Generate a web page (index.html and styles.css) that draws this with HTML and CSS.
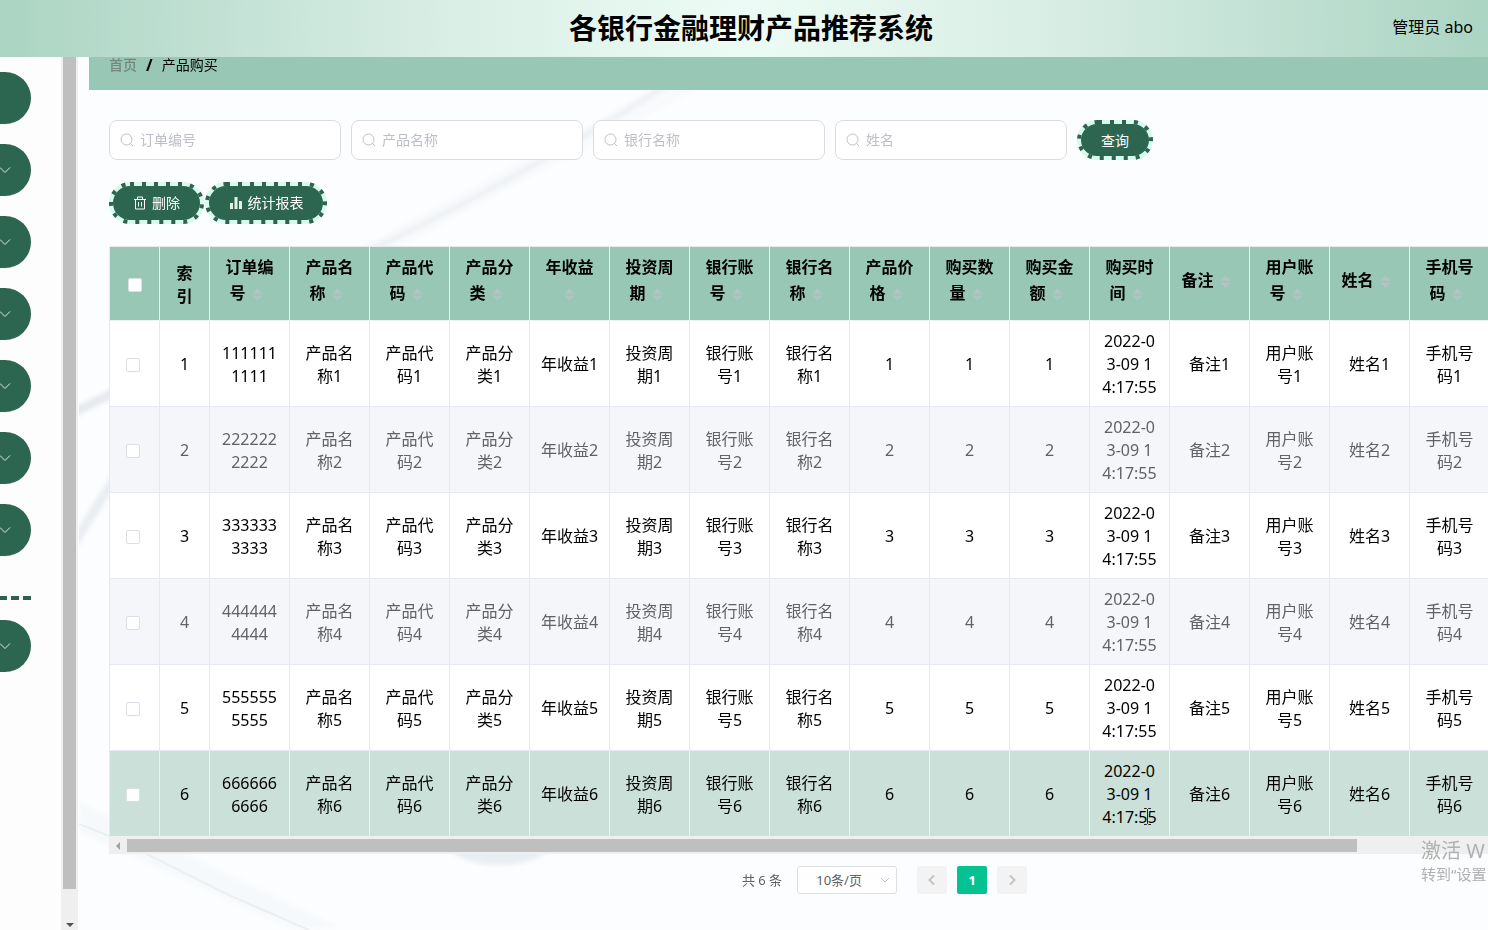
FILE: index.html
```html
<!DOCTYPE html>
<html lang="zh-CN">
<head>
<meta charset="utf-8">
<title>各银行金融理财产品推荐系统</title>
<link rel="stylesheet" href="styles.css">
</head>
<body>
<header class="topbar">
  <h1 class="title">各银行金融理财产品推荐系统</h1>
  <span class="user">管理员 abo</span>
</header>
<div class="layout">
  <nav class="sidebar" aria-label="菜单">
    <div class="menu">
      <button class="menu-item" aria-label="首页"></button>
      <button class="menu-item" aria-label="菜单 1"><svg class="chev" viewBox="0 0 12 12"><path d="M1 3.500l5 5 5-5"/></svg></button>
      <button class="menu-item" aria-label="菜单 2"><svg class="chev" viewBox="0 0 12 12"><path d="M1 3.500l5 5 5-5"/></svg></button>
      <button class="menu-item" aria-label="菜单 3"><svg class="chev" viewBox="0 0 12 12"><path d="M1 3.500l5 5 5-5"/></svg></button>
      <button class="menu-item" aria-label="菜单 4"><svg class="chev" viewBox="0 0 12 12"><path d="M1 3.500l5 5 5-5"/></svg></button>
      <button class="menu-item" aria-label="菜单 5"><svg class="chev" viewBox="0 0 12 12"><path d="M1 3.500l5 5 5-5"/></svg></button>
      <button class="menu-item" aria-label="菜单 6"><svg class="chev" viewBox="0 0 12 12"><path d="M1 3.500l5 5 5-5"/></svg></button>
      <div class="menu-line"></div>
      <button class="menu-item" aria-label="菜单 7"><svg class="chev" viewBox="0 0 12 12"><path d="M1 3.500l5 5 5-5"/></svg></button>
    </div>
    <div class="vbar"><div class="vthumb"></div><div class="varrow"></div></div>
  </nav>
  <main class="main">
    <svg class="backdrop" viewBox="0 0 1409 873" preserveAspectRatio="xMinYMin slice" aria-hidden="true">
      <defs><filter id="soft" x="-20%" y="-20%" width="140%" height="140%"><feGaussianBlur stdDeviation="2"/></filter></defs>
      <g filter="url(#soft)">
        <path d="M600 20C500 85 395 145 270 203" fill="none" stroke="#e9edf1" stroke-width="7"/>
        <path d="M620 20C500 85 400 135 280 203" fill="none" stroke="#f5f7f9" stroke-width="18" opacity=".5"/>
        <path d="M-10 358L50 328" fill="none" stroke="#e6e9ed" stroke-width="9"/>
        <path d="M-6 488L40 414" fill="none" stroke="#e9edf1" stroke-width="9"/>
        <path d="M0 745L260 870L215 873L0 775z" fill="#f6f9fb"/>
        <ellipse cx="420" cy="788" rx="50" ry="20" fill="#e9eef2"/>
      </g>
      <path d="M0 767L40 783L150 838L230 873" fill="none" stroke="#eceef1" stroke-width="2"/>
    </svg>
    <div class="sheet">
      <div class="crumbs"><a class="crumb-home" href="#">首页</a><b class="slash">/</b><span>产品购买</span></div>
      <div class="content">
        <form class="filters">
          <label class="field"><svg class="search" viewBox="0 0 14 14"><circle cx="6.5" cy="6.5" r="5.5"/><path d="M10.5 10.5l2.500 2.500"/></svg><input type="text" placeholder="订单编号" aria-label="订单编号"></label>
          <label class="field"><svg class="search" viewBox="0 0 14 14"><circle cx="6.5" cy="6.5" r="5.5"/><path d="M10.5 10.5l2.500 2.500"/></svg><input type="text" placeholder="产品名称" aria-label="产品名称"></label>
          <label class="field"><svg class="search" viewBox="0 0 14 14"><circle cx="6.5" cy="6.5" r="5.5"/><path d="M10.5 10.5l2.500 2.500"/></svg><input type="text" placeholder="银行名称" aria-label="银行名称"></label>
          <label class="field"><svg class="search" viewBox="0 0 14 14"><circle cx="6.5" cy="6.5" r="5.5"/><path d="M10.5 10.5l2.500 2.500"/></svg><input type="text" placeholder="姓名" aria-label="姓名"></label>
          <button class="pill pill-query" type="button"><svg class="ring"><rect/></svg>查询</button>
        </form>
        <div class="actions">
          <button class="pill pill-delete" type="button"><svg class="ring"><rect/></svg><svg class="ico" viewBox="0 0 14 14"><path d="M1 3.5h12M4.5 3V1h5v2M2.5 3.5v9.500h9V3.500M5.500 6v4.500M8.500 6v4.500"/></svg>删除</button>
          <button class="pill pill-report" type="button"><svg class="ring"><rect/></svg><svg class="ico ico-bars" viewBox="0 0 14 14"><path d="M1 7h3v6H1zM5.500 1h3v12h-3zM10 5h3v8h-3z"/></svg>统计报表</button>
        </div>
        <div class="table-wrap">
          <table class="grid">
            <colgroup><col class="c-small" span="2"><col class="c-std" span="16"></colgroup>
            <thead>
              <tr>
                <th><input type="checkbox" aria-label="全选"></th>
                <th class="plain">索引</th>
                <th>订单编号<i class="sort"></i></th><th>产品名称<i class="sort"></i></th><th>产品代码<i class="sort"></i></th><th>产品分类<i class="sort"></i></th><th>年收益<i class="sort"></i></th><th>投资周期<i class="sort"></i></th><th>银行账号<i class="sort"></i></th><th>银行名称<i class="sort"></i></th><th>产品价格<i class="sort"></i></th><th>购买数量<i class="sort"></i></th><th>购买金额<i class="sort"></i></th><th>购买时间<i class="sort"></i></th><th>备注<i class="sort"></i></th><th>用户账号<i class="sort"></i></th><th>姓名<i class="sort"></i></th><th>手机号码<i class="sort"></i></th>
              </tr>
            </thead>
            <tbody>
              <tr><td class="pick"><input type="checkbox" aria-label="选择 1"></td><td>1</td><td>1111111111</td><td>产品名称1</td><td>产品代码1</td><td>产品分类1</td><td>年收益1</td><td>投资周期1</td><td>银行账号1</td><td>银行名称1</td><td>1</td><td>1</td><td>1</td><td>2022-03-09 14:17:55</td><td>备注1</td><td>用户账号1</td><td>姓名1</td><td>手机号码1</td></tr>
              <tr><td class="pick"><input type="checkbox" aria-label="选择 2"></td><td>2</td><td>2222222222</td><td>产品名称2</td><td>产品代码2</td><td>产品分类2</td><td>年收益2</td><td>投资周期2</td><td>银行账号2</td><td>银行名称2</td><td>2</td><td>2</td><td>2</td><td>2022-03-09 14:17:55</td><td>备注2</td><td>用户账号2</td><td>姓名2</td><td>手机号码2</td></tr>
              <tr><td class="pick"><input type="checkbox" aria-label="选择 3"></td><td>3</td><td>3333333333</td><td>产品名称3</td><td>产品代码3</td><td>产品分类3</td><td>年收益3</td><td>投资周期3</td><td>银行账号3</td><td>银行名称3</td><td>3</td><td>3</td><td>3</td><td>2022-03-09 14:17:55</td><td>备注3</td><td>用户账号3</td><td>姓名3</td><td>手机号码3</td></tr>
              <tr><td class="pick"><input type="checkbox" aria-label="选择 4"></td><td>4</td><td>4444444444</td><td>产品名称4</td><td>产品代码4</td><td>产品分类4</td><td>年收益4</td><td>投资周期4</td><td>银行账号4</td><td>银行名称4</td><td>4</td><td>4</td><td>4</td><td>2022-03-09 14:17:55</td><td>备注4</td><td>用户账号4</td><td>姓名4</td><td>手机号码4</td></tr>
              <tr><td class="pick"><input type="checkbox" aria-label="选择 5"></td><td>5</td><td>5555555555</td><td>产品名称5</td><td>产品代码5</td><td>产品分类5</td><td>年收益5</td><td>投资周期5</td><td>银行账号5</td><td>银行名称5</td><td>5</td><td>5</td><td>5</td><td>2022-03-09 14:17:55</td><td>备注5</td><td>用户账号5</td><td>姓名5</td><td>手机号码5</td></tr>
              <tr class="active"><td class="pick"><input type="checkbox" aria-label="选择 6"></td><td>6</td><td>6666666666</td><td>产品名称6</td><td>产品代码6</td><td>产品分类6</td><td>年收益6</td><td>投资周期6</td><td>银行账号6</td><td>银行名称6</td><td>6</td><td>6</td><td>6</td><td class="hovered">2022-03-09 14:17:55<svg class="ibeam" viewBox="0 0 9 17"><path d="M1 .5h2.500l1 1 1-1H8M4.500 1.500v14M1 16.500h2.500l1-1 1 1H8"/></svg></td><td>备注6</td><td>用户账号6</td><td>姓名6</td><td>手机号码6</td></tr>
            </tbody>
          </table>
          <div class="hbar"><div class="harrow"></div><div class="hthumb"></div></div>
        </div>
        <div class="pager">
          <span class="total">共 6 条</span>
          <span class="size"><select aria-label="每页条数"><option>10条/页</option></select><svg class="down" viewBox="0 0 12 12"><path d="M2 4l4 4 4-4"/></svg></span>
          <div class="pages">
            <button class="page" aria-label="上一页"><svg viewBox="0 0 12 12"><path d="M8 1.500L3.500 6 8 10.500"/></svg></button>
            <button class="page current">1</button>
            <button class="page" aria-label="下一页"><svg viewBox="0 0 12 12"><path d="M4 1.500L8.500 6 4 10.500"/></svg></button>
          </div>
        </div>
      </div>
    </div>
  </main>
</div>
<aside class="notice"><div class="notice-head">激活 W</div><div class="notice-text">转到“设置</div></aside>
</body>
</html>
```

FILE: styles.css
```css
* { box-sizing: border-box; }
body {
  margin: 0;
  height: 100vh;
  display: flex;
  flex-direction: column;
  overflow: hidden;
  position: relative;
  background: #fdfdfd;
  color: #000;
  font: 16px/23px "Noto Sans", "Noto Sans CJK SC", sans-serif;
}
button, input, select { font: inherit; }

.topbar {
  flex: none;
  height: 57px;
  display: grid;
  grid-template-columns: 1fr auto 1fr;
  align-items: center;
  padding: 0 15px 2px 29px;
  background: radial-gradient(circle at center, #edfcf6 0, #d9eee5 300px, #abd4c3 744px);
}
.title { grid-column: 2; margin: 0; font-size: 28px; line-height: 40px; font-weight: 700; }
.user { justify-self: end; }

.layout { flex: 1; min-height: 0; display: flex; }
.sidebar { flex: none; width: 79px; display: flex; background: #fdfdfd; }
.menu { width: 61px; padding-top: 15px; display: flex; flex-direction: column; gap: 20px; }
.menu-item {
  width: 31px;
  height: 52px;
  padding: 0;
  border: 0;
  border-radius: 0 26px 26px 0;
  background: #2c6650;
  display: flex;
  align-items: center;
}
.chev { width: 12px; height: 12px; margin-left: -1px; fill: none; stroke: #dcebe4; }
.menu-line {
  width: 31px;
  height: 4px;
  margin-top: 20px;
  background: repeating-linear-gradient(to left, #2f5f4e 0 8px, transparent 8px 12px);
}
.vbar { width: 17px; padding: 0 2px 3px; display: flex; flex-direction: column; align-items: center; background: #efefef; }
.vthumb { width: 13px; flex: 1; background: #bfbfbf; }
.varrow { margin-top: 34px; border: 4px solid transparent; border-top-color: #505050; border-bottom: 0; }

.main { flex: 1; min-width: 0; position: relative; overflow: hidden; background: #fcfdfe; }
.backdrop { position: absolute; inset: 0; width: 100%; height: 100%; }
.sheet { position: relative; margin-left: 10px; }
.crumbs {
  height: 33px;
  padding: 0 20px 17px;
  display: flex;
  align-items: center;
  background: #98c7b5;
  font-size: 14px;
  line-height: 16px;
}
.crumb-home { color: #75877f; font-weight: 500; text-decoration: none; }
.slash { margin: 0 9px; font-size: 16px; }
.content { padding: 30px 0 0 20px; }

.filters { display: flex; gap: 10px; }
.field {
  flex: none;
  width: 232px;
  height: 40px;
  padding: 0 10px 1px;
  display: flex;
  align-items: center;
  gap: 6px;
  border: 1px solid #dcdcdf;
  border-radius: 8px;
  background: #fff;
}
.field input { flex: 1; min-width: 0; padding: 0 0 1px; border: 0; outline: 0; background: none; font-size: 14px; }
.field input::placeholder { color: #bcbfc7; opacity: 1; }
.search { width: 14px; height: 14px; fill: none; stroke: #bcbfc7; }

.actions { display: flex; gap: 1px; margin-top: 22px; }
.pill {
  position: relative;
  display: flex;
  align-items: center;
  justify-content: center;
  gap: 5px;
  height: 42px;
  padding: 0 0 1px;
  border: 4px solid #d4fbed;
  border-radius: 21px;
  background: #2c6650;
  color: #fff;
  font-size: 14px;
}
.pill-query { width: 76px; height: 40px; padding: 0; }
.pill-delete { width: 95px; }
.pill-report { width: 122px; }
.ring { position: absolute; top: -4px; left: -4px; width: calc(100% + 8px); height: calc(100% + 8px); }
.ring rect {
  x: 2px;
  y: 2px;
  rx: 19px;
  width: calc(100% - 4px);
  height: calc(100% - 4px);
  fill: none;
  stroke: #33604f;
  stroke-width: 4px;
  stroke-dasharray: 4 8;
}
.ico { width: 14px; height: 14px; fill: none; stroke: #fff; }
.ico-bars { fill: #e4f0e4; stroke: none; }

.table-wrap { margin-top: 22px; overflow: hidden; }
.grid {
  width: 1381px;
  table-layout: fixed;
  border-collapse: separate;
  border-spacing: 0;
  border: solid #e6e9ef;
  border-width: 1px 0 0 1px;
  text-align: center;
  word-break: break-all;
}
.c-small { width: 50px; }
.c-std { width: 80px; }
.grid th, .grid td { padding: 9px 10px 7px; border: solid #e6e9ef; border-width: 0 1px 1px 0; }
.grid th { height: 74px; padding: 7px 10px 14px; background: #98c7b5; border-color: #eaf3ef; line-height: 26px; font-weight: 700; }
.grid th.plain { line-height: 23px; padding: 9px 10px 7px; }
.grid th:first-child { padding: 2px 0 0; }
.grid td { background: #fff; }
.grid tr:nth-child(even) td { background: #f4f6fa; color: #606266; }
.grid tr.active td { background: #cbe0d8; color: #000; border-color: #eaf3ef; }
.grid td.pick { padding: 3px 4px 0 0; }
.grid input {
  appearance: none;
  display: block;
  width: 14px;
  height: 14px;
  margin: 0 auto;
  border: 1px solid #dcdfe6;
  border-radius: 2px;
  background: #fff;
}
.sort {
  display: inline-block;
  width: 24px;
  height: 12px;
  vertical-align: middle;
  background: #b4c3c4;
  clip-path: polygon(12px 0, 17px 5px, 7px 5px, 7px 7px, 17px 7px, 12px 12px, 7px 7px, 7px 5px);
}
.hovered { position: relative; }
.ibeam { position: absolute; left: 53px; top: 57px; width: 9px; height: 17px; fill: none; stroke: #222; }

.hbar { height: 17px; display: flex; align-items: center; background: #efefef; }
.harrow { margin: 0 7px 0 6px; border: 4px solid transparent; border-right-color: #a3a3a3; border-left-width: 1px; }
.hthumb { width: 1230px; height: 13px; background: #bfbfbf; }

.pager {
  margin: 12px -172px 0 0;
  display: flex;
  justify-content: center;
  align-items: center;
  color: #606266;
  font-size: 13px;
}
.total { margin-right: 15px; }
.size { position: relative; margin-right: 20px; }
.size select {
  appearance: none;
  display: block;
  width: 100px;
  height: 28px;
  padding: 0 16px 0 0;
  border: 1px solid #dcdfe6;
  border-radius: 3px;
  background: #fff;
  color: #606266;
  text-align: center;
  text-align-last: center;
}
.down { position: absolute; right: 6px; top: 8px; width: 12px; height: 12px; fill: none; stroke: #c0c4cc; }
.pages { display: flex; gap: 10px; }
.page {
  width: 30px;
  height: 28px;
  padding: 0;
  border: 0;
  border-radius: 2px;
  display: flex;
  align-items: center;
  justify-content: center;
  background: #f3f3f4;
  color: #fff;
  font-weight: 700;
}
.page svg { width: 12px; height: 12px; fill: none; stroke: #c0c4cc; stroke-width: 2px; }
.page.current { background: #05c293; }

.notice { position: absolute; right: 0; bottom: 46px; width: 67px; overflow: hidden; white-space: nowrap; color: #b0b0b0; }
.notice-head { font-size: 20px; line-height: 26px; }
.notice-text { font-size: 15px; line-height: 20px; }
```
